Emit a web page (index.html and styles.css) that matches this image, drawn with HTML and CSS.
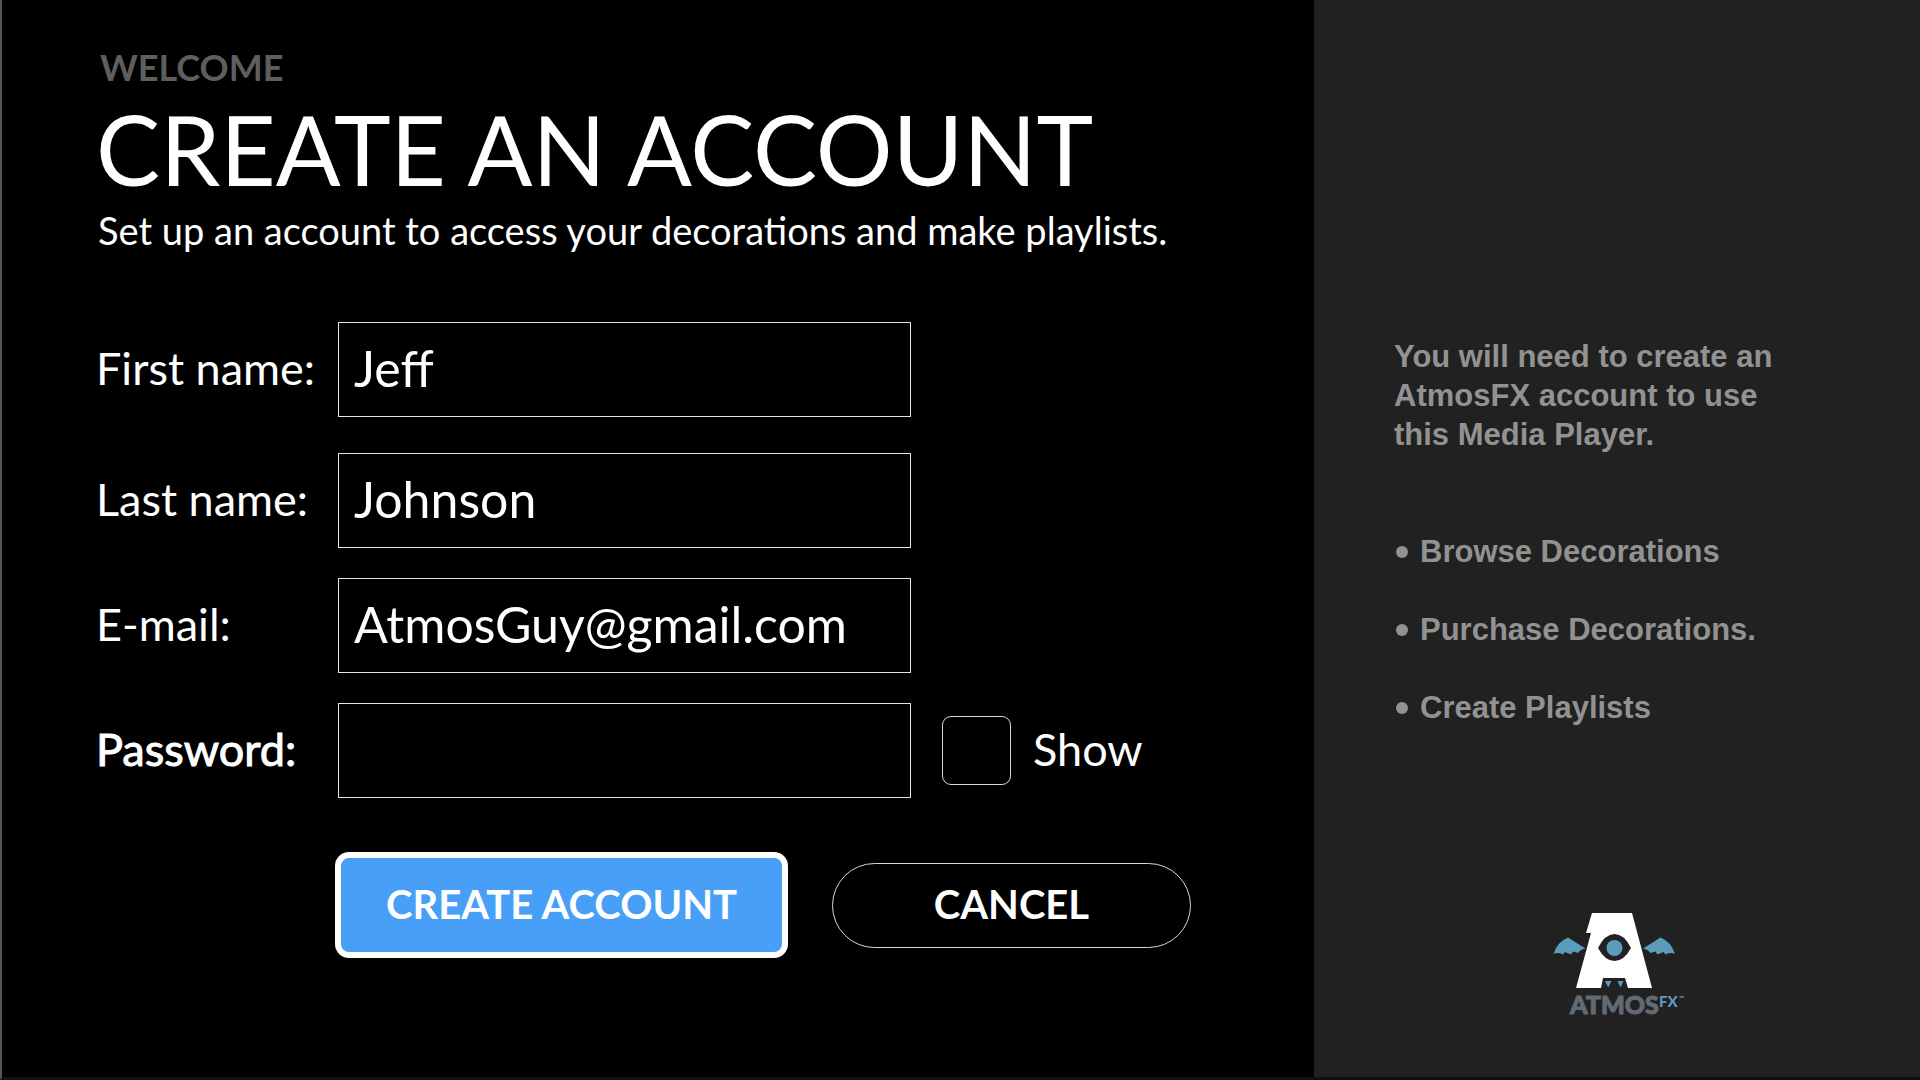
FILE: index.html
```html
<!DOCTYPE html>
<html lang="en">
<head>
  <meta charset="utf-8">
  <meta name="viewport" content="width=device-width, initial-scale=1">
  <title>Create an account</title>
  <link rel="stylesheet" href="styles.css">
</head>
<body>
  <div class="page">
    <main class="main">
      <header class="intro">
        <p class="eyebrow">WELCOME</p>
        <h1 class="title">CREATE AN ACCOUNT</h1>
        <p class="subtitle">Set up an account to access your decorations and make playlists.</p>
      </header>
      <form class="form">
        <div class="row row-first">
          <label class="label" for="first-name">First name:</label>
          <input class="field" id="first-name" type="text" value="Jeff">
        </div>
        <div class="row">
          <label class="label" for="last-name">Last name:</label>
          <input class="field" id="last-name" type="text" value="Johnson">
        </div>
        <div class="row">
          <label class="label" for="email">E-mail:</label>
          <input class="field" id="email" type="email" value="AtmosGuy@gmail.com">
        </div>
        <div class="row">
          <label class="label label-active" for="password">Password:</label>
          <input class="field" id="password" type="password">
          <div class="show">
            <input class="check" id="show" type="checkbox">
            <label class="label" for="show">Show</label>
          </div>
        </div>
        <div class="actions">
          <button class="button button-primary" type="submit">CREATE ACCOUNT</button>
          <button class="button button-cancel" type="button">CANCEL</button>
        </div>
      </form>
    </main>
    <aside class="side">
      <p class="note">You will need to create an AtmosFX account to use this Media Player.</p>
      <ul class="features">
        <li>Browse Decorations</li>
        <li>Purchase Decorations.</li>
        <li>Create Playlists</li>
      </ul>
      <svg class="logo" viewBox="-3 0 160 130" role="img" aria-label="AtmosFX">
        <path fill="#fff" d="M52 13H92L112 88H88L85 78H63L61 88H36L51 33H46Z"/>
        <path fill="#212121" d="M58 48Q65 34 74.500 34Q84 34 91 48Q84 61 74.500 61Q65 61 58 48Z"/>
        <circle cx="74.500" cy="48" r="8" fill="#5b9bbb"/>
        <path fill="#5b9bbb" d="M65 81H71.500L68.200 87.500ZM77.500 81H83.500L80.500 87.500Z"/>
        <path id="wing" fill="#5b9bbb" d="M45.500 48.500L28 37.500Q17 42 13.500 54Q18 52 23 54.500L25 52L31 54.500L33 51.500L38 53Q40 49.500 45.500 48.500Z"/>
        <use href="#wing" transform="translate(148.500 0) scale(-1 1)"/>
        <text class="logo-name" x="30" y="114">ATMOS</text>
        <text class="logo-fx" x="119" y="107">FX</text>
        <text class="logo-tm" x="139" y="101">™</text>
      </svg>
    </aside>
  </div>
</body>
</html>
```
FILE: styles.css
```css
* {
  box-sizing: border-box;
}

body {
  margin: 0;
  background: #000;
  color: #fff;
  font-family: Lato, "Open Sans", sans-serif;
}

p,
h1,
ul {
  margin: 0;
  padding: 0;
}

.page {
  display: grid;
  grid-template-columns: 1312fr 606fr;
  min-height: 100vh;
  border-left: 2px solid #555;
  border-bottom: 3px solid #111;
}

.main {
  padding: 45px 32px 48px 94px;
}

.eyebrow {
  padding-left: 4px;
  color: #5e5e5e;
  font-size: 36px;
  font-weight: 700;
  line-height: 44px;
}

.title {
  font-size: 96px;
  font-weight: 400;
  line-height: 120px;
}

.subtitle {
  padding-left: 2px;
  font-size: 38px;
  line-height: 42px;
}

.form {
  display: flex;
  flex-direction: column;
  gap: 30px;
  margin-top: 71px;
}

.row {
  display: grid;
  grid-template-columns: 242px minmax(0, 573px) auto;
  align-items: center;
}

.row-first {
  margin-bottom: 6px;
}

.label {
  padding-bottom: 4px;
  font-size: 45px;
  line-height: 52px;
}

.label-active {
  -webkit-text-stroke: 1px #fff;
}

.field {
  width: 100%;
  height: 95px;
  padding: 0 15px 4px;
  border: 1px solid #e4e4e4;
  border-radius: 0;
  outline: none;
  background: transparent;
  color: #fff;
  font: 400 50px Lato, "Open Sans", sans-serif;
}

.show {
  display: flex;
  align-items: center;
  gap: 22px;
  margin-left: 31px;
}

.check {
  appearance: none;
  width: 69px;
  height: 69px;
  margin: 0;
  border: 1px solid #d8d8d8;
  border-radius: 9px;
}

.actions {
  display: flex;
  align-items: center;
  gap: 44px;
  margin-top: 24px;
  padding-left: 239px;
}

.button {
  padding: 0 0 2px;
  color: #fff;
  font: 700 40px Lato, "Open Sans", sans-serif;
}

.button-primary {
  width: 453px;
  height: 106px;
  border: 6px solid #fff;
  border-radius: 14px;
  background: #489ff8;
}

.button-cancel {
  width: 359px;
  height: 85px;
  border: 1px solid #d8d8d8;
  border-radius: 43px;
  background: transparent;
}

.side {
  display: flex;
  flex-direction: column;
  padding: 337px 120px 47px 80px;
  background: #212121;
  color: #929292;
  font: 700 31px/39px "Liberation Sans", Arial, sans-serif;
}

.features {
  display: flex;
  flex-direction: column;
  gap: 39px;
  margin-top: 78px;
  list-style: none;
}

.features li {
  display: flex;
  align-items: center;
  gap: 12px;
}

.features li::before {
  content: "";
  width: 12px;
  height: 12px;
  margin-left: 2px;
  border-radius: 50%;
  background: #929292;
}

.logo {
  width: 160px;
  height: 130px;
  margin: auto auto 0 143px;
}

.logo-name {
  fill: #616a75;
  stroke: #616a75;
  stroke-width: 1px;
  font: 900 25px Lato, sans-serif;
}

.logo-fx {
  fill: #5b9bbb;
  font: 900 15px Lato, sans-serif;
}

.logo-tm {
  fill: #5b9bbb;
  font: 700 7px Lato, sans-serif;
}

@media (max-width: 1500px) {
  .page {
    grid-template-columns: 1fr;
  }

  .side {
    padding-top: 64px;
    gap: 32px;
  }
}
```
